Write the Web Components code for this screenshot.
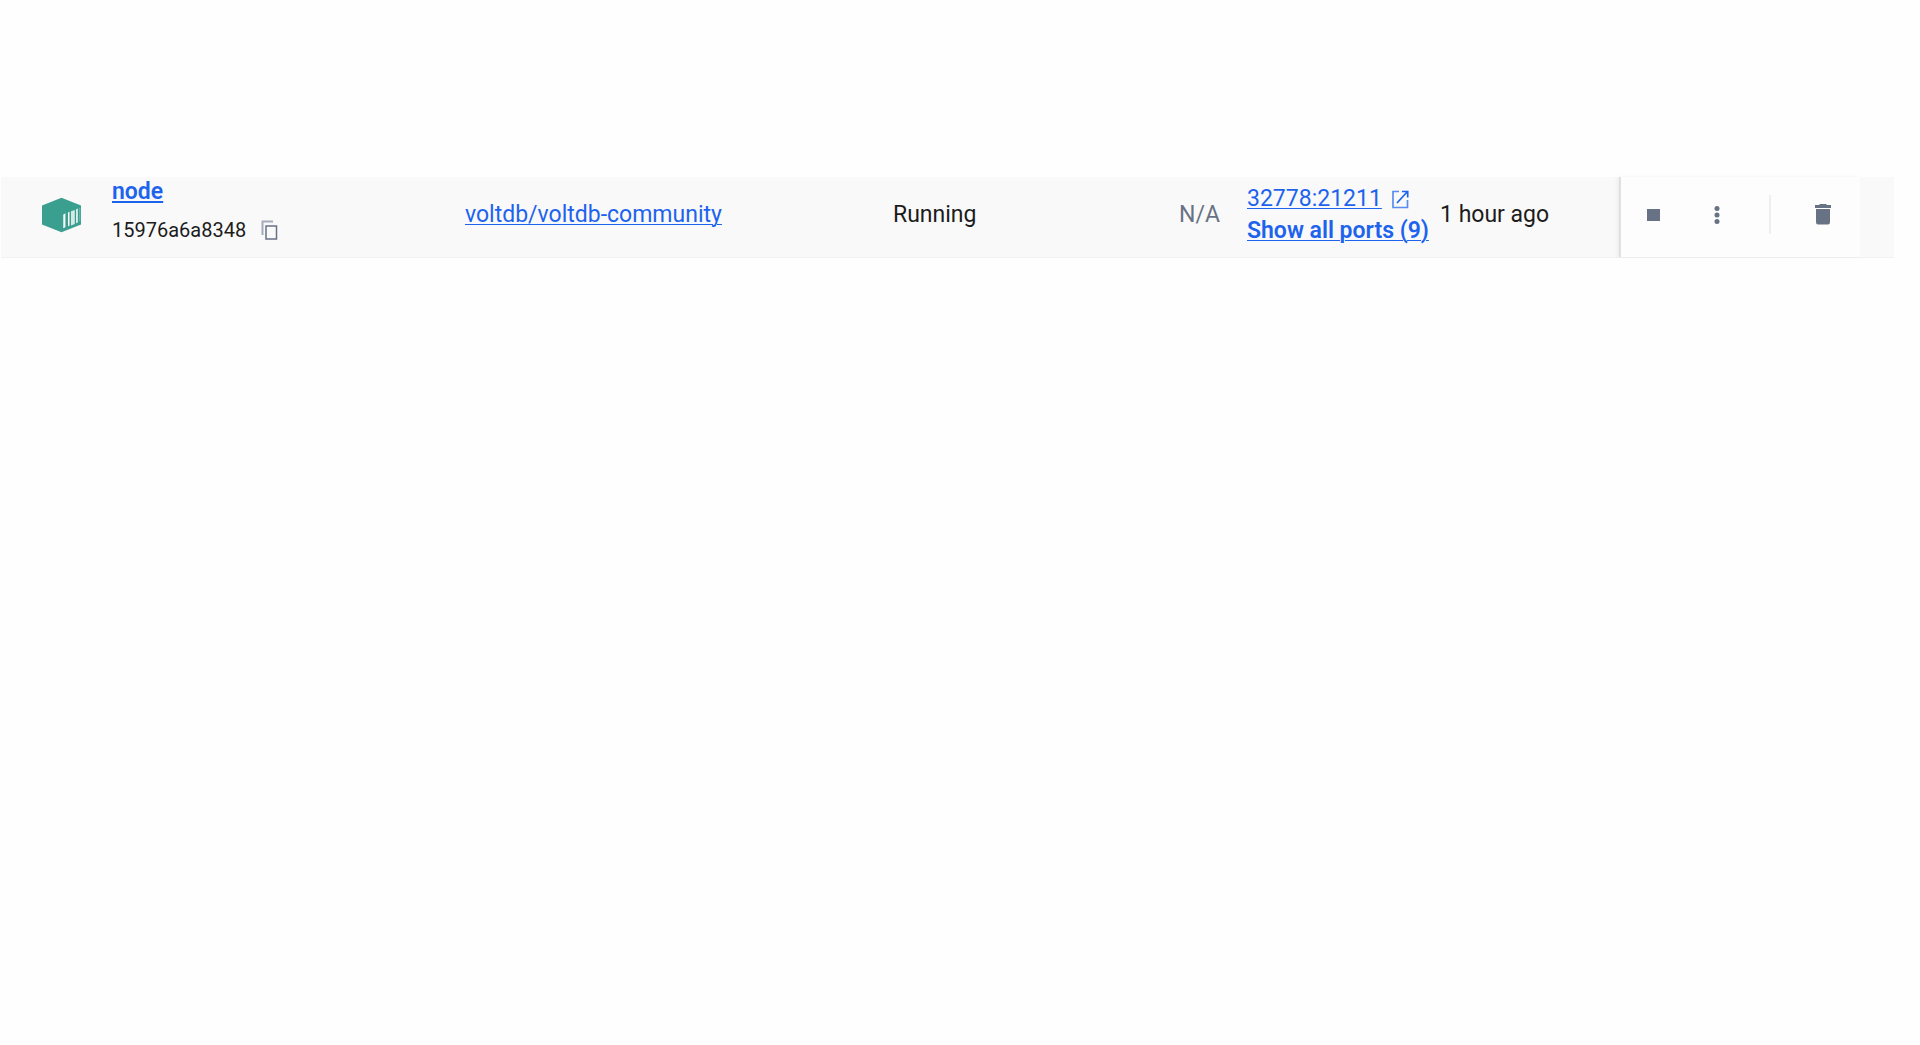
<!DOCTYPE html>
<html lang="en">
<head>
<meta charset="utf-8">
<title>Containers</title>
<style>
  body { margin: 0; padding: 177px 26px 0 1px; background: #fefefe; font-family: Roboto, "Liberation Sans", sans-serif; font-size: 23px; line-height: 32px; color: #1c1c1c; }
</style>
</head>
<body>
<container-row>
  <container-name slot="name" label="node" uid="15976a6a8348"></container-name>
  <text-link slot="image">voltdb/voltdb-community</text-link>
  <span slot="status">Running</span>
  <span slot="cpu">N/A</span>
  <port-list slot="ports" port="32778:21211" count="9"></port-list>
  <span slot="started">1 hour ago</span>
  <row-actions slot="actions"></row-actions>
</container-row>
<script>
  const define = (name, html, setup) => customElements.define(name, class extends HTMLElement {
    connectedCallback() {
      if (this.shadowRoot) return;
      const root = this.attachShadow({ mode: 'open' });
      root.innerHTML = html;
      if (setup) setup(this, root);
    }
  });

  define('text-link', `
    <style>
      :host { display: block; }
      a { color: #1d63ed; text-decoration: underline; text-decoration-thickness: var(--underline, 1px); text-underline-offset: 2px; white-space: nowrap; }
      :host([strong]) a { font-weight: 600; }
    </style>
    <a href="#"><slot></slot></a>`);

  define('container-icon', `
    <style>:host { display: block; } svg { display: block; }</style>
    <svg width="39" height="36" viewBox="0 0 39 36" aria-hidden="true">
      <path fill="#3b9f8f" d="M19.500 .8 39 8.500V27.500L19.500 35.200 0 27.500V8.500Z"/>
      <path fill="#fff" d="M21.300 17.500l1.900-1v13.800l-1.900 1zM26 15.500l1.500-.7v13.800l-1.500.7zM34.200 12.200l1.500-.7v14l-1.500.7z"/>
      <path fill="#d3eae6" d="M29 14.200l3.800-1.300v14.200l-3.800 1.300z"/>
      <path fill="#8cc7be" d="M23.200 16.500l.8-.4v13.800l-.8.4zM37.500 11l.7-.3v13.600l-.7.3z"/>
    </svg>`);

  define('container-name', `
    <style>
      :host { display: block; --underline: 2px; }
      text-link { line-height: 30px; }
      .id { display: flex; align-items: center; gap: 15px; margin-top: 9px; font-size: 20px; line-height: 28px; }
      button { border: 0; padding: 0; background: none; display: block; }
      svg { display: block; }
    </style>
    <text-link strong></text-link>
    <div class="id"><span></span>
      <button aria-label="Copy container ID"><svg width="17" height="20" viewBox="0 0 17 20" fill="none" stroke="#677285">
        <path stroke="#a4abb8" stroke-width="2" d="M1.500 15V1.500H12"/>
        <rect x="5" y="6" width="10.500" height="13" stroke-width="1.500"/>
      </svg></button>
    </div>`, (host, root) => {
      root.querySelector('text-link').textContent = host.getAttribute('label');
      root.querySelector('span').textContent = host.getAttribute('uid');
    });

  define('port-list', `
    <style>
      :host { display: block; }
      .port { display: flex; align-items: center; gap: 10px; }
      svg { display: block; }
    </style>
    <div class="port"><text-link class="first"></text-link>
      <svg width="17" height="19" viewBox="0 0 17 19" fill="none" stroke="#1d63ed" stroke-width="1.700" aria-hidden="true">
        <path d="M7 1.500H1V17.500H15.500V10" stroke="#5a8df2"/><path d="M10 1.500H15.700V7.500M15.500 1.500 5 13"/>
      </svg>
    </div>
    <text-link strong class="all"></text-link>`, (host, root) => {
      root.querySelector('.first').textContent = host.getAttribute('port');
      root.querySelector('.all').textContent = 'Show all ports (' + host.getAttribute('count') + ')';
    });

  define('row-actions', `
    <style>
      :host { display: flex; align-items: center; height: 100%; box-sizing: border-box; padding-bottom: 5px; background: #fdfdfd; border-left: 2px solid #e0e0e0; box-shadow: -2px 0 3px #0000000d; }
      button { border: 0; padding: 0; background: none; width: 64px; height: 40px; display: grid; place-items: center; }
      i { width: 2px; height: 39px; margin: 0 20px; background: #efefef; }
      svg { display: block; fill: #677285; }
    </style>
    <button aria-label="Stop"><svg width="13" height="12"><path d="M0 0h13v12H0z"/></svg></button>
    <button aria-label="More actions"><svg width="6" height="18"><circle cx="3" cy="2.500" r="2.500"/><circle cx="3" cy="9" r="2.500"/><circle cx="3" cy="15.500" r="2.500"/></svg></button>
    <i></i>
    <button aria-label="Delete"><svg width="16" height="21"><path d="M0 1h4l1-1h6l1 1h4v3H0zM1 5h14v13q0 2.500-2 2.500H3Q1 20.500 1 18z"/></svg></button>`);

  define('container-row', `
    <style>
      :host { display: grid; grid-template-columns: 41px 70px minmax(0, 353fr) minmax(0, 428fr) minmax(0, 286fr) 68px 193px 179px 241px; align-items: center; padding-right: 34px; background: #f9f9f9; border-bottom: 1px solid #f2f2f2; white-space: nowrap; }
      .cell { min-width: 0; padding-bottom: 4px; }
      container-icon { grid-column: 2; padding-bottom: 5px; }
      .name { height: 80px; box-sizing: border-box; }
      .cpu { color: #677285; }
      .actions { align-self: stretch; }
    </style>
    <container-icon></container-icon>
    <div class="name"><slot name="name"></slot></div>
    <div class="cell"><slot name="image"></slot></div>
    <div class="cell"><slot name="status"></slot></div>
    <div class="cell cpu"><slot name="cpu"></slot></div>
    <div class="cell"><slot name="ports"></slot></div>
    <div class="cell"><slot name="started"></slot></div>
    <div class="actions"><slot name="actions"></slot></div>`);
</script>
</body>
</html>
